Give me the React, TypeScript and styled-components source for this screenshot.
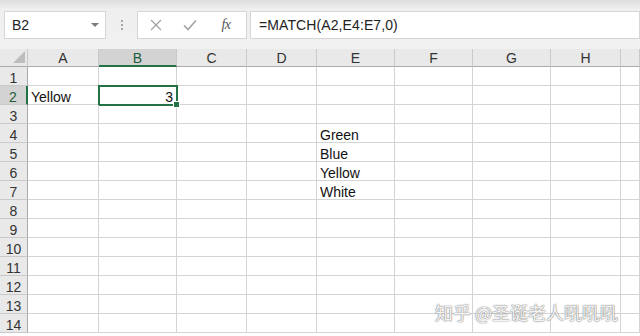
import React from "react";
import styled, { createGlobalStyle } from "styled-components";

const Global = createGlobalStyle`
  html, body { margin: 0; padding: 0; background: #fff; }
  body { font-family: "Liberation Sans", Arial, sans-serif; overflow: hidden; }
`;

const Page = styled.div`
  position: relative;
  width: 640px;
  height: 336px;
  overflow: hidden;
  display: flex;
  flex-direction: column;
  background: #fff;
`;

const Toolbar = styled.div`
  flex: none;
  height: 49px;
  box-sizing: border-box;
  padding: 11px 0 0 4px;
  background: linear-gradient(#dedede 0px, #efefef 9px, #f1f1f1 100%);
  display: flex;
  align-items: flex-start;
`;

const Box = styled.div<{ $w?: number }>`
  box-sizing: border-box;
  height: 28px;
  width: ${(p) => (p.$w ? `${p.$w}px` : "auto")};
  flex: ${(p) => (p.$w ? "none" : "1")};
  background: #fff;
  border: 1px solid #d6d6d6;
  display: flex;
  align-items: center;
  font-size: 14px;
  color: #222;
`;

const NameText = styled.span`
  flex: 1;
  padding-left: 7px;
`;

const Caret = styled.span`
  width: 0;
  height: 0;
  border-left: 4px solid transparent;
  border-right: 4px solid transparent;
  border-top: 4px solid #7a7a7a;
  margin-right: 6px;
`;

const Dots = styled.div`
  width: 31px;
  height: 28px;
  display: flex;
  flex-direction: column;
  align-items: center;
  justify-content: center;
  gap: 2px;
  & > i {
    width: 2px;
    height: 2px;
    background: #a8a8a8;
  }
`;

const IconSlot = styled.div<{ $w: number }>`
  width: ${(p) => p.$w}px;
  display: flex;
  justify-content: center;
  align-items: center;
`;

const Fx = styled.span`
  font-family: "Liberation Serif", serif;
  font-style: italic;
  font-size: 14px;
  color: #555;
  letter-spacing: -0.5px;
`;

const Formula = styled.span`
  padding-left: 8px;
  letter-spacing: 0.1px;
`;

const Gap = styled.div<{ $w: number }>`
  width: ${(p) => p.$w}px;
  flex: none;
`;

const Sheet = styled.div`
  flex: none;
  display: grid;
  grid-template-columns: 28px 71px 78px 70px 70px 78px 78px 78px 70px 1fr;
  grid-template-rows: 18px;
  grid-auto-rows: 19px;
`;

const Corner = styled.div`
  position: relative;
  background: #e9e9e9;
  border-right: 1px solid #c9c9c9;
  border-bottom: 1px solid #ababab;
  &::after {
    content: "";
    position: absolute;
    right: 2px;
    bottom: 3px;
    width: 0;
    height: 0;
    border-left: 12px solid transparent;
    border-bottom: 12px solid #bdbdbd;
  }
`;

const ColHead = styled.div<{ $sel?: boolean }>`
  box-sizing: border-box;
  background: ${(p) => (p.$sel ? "#d3d3d3" : "#e9e9e9")};
  border-right: 1px solid #c9c9c9;
  border-bottom: ${(p) => (p.$sel ? "2px solid #217346" : "1px solid #ababab")};
  color: ${(p) => (p.$sel ? "#1f5d3a" : "#333")};
  font-size: 14px;
  line-height: 19px;
  text-align: center;
`;

const RowHead = styled.div<{ $sel?: boolean }>`
  box-sizing: border-box;
  background: ${(p) => (p.$sel ? "#d3d3d3" : "#e9e9e9")};
  border-right: ${(p) => (p.$sel ? "2px solid #217346" : "1px solid #ababab")};
  border-bottom: 1px solid #c9c9c9;
  color: ${(p) => (p.$sel ? "#1f5d3a" : "#333")};
  font-size: 14px;
  line-height: 22px;
  text-align: center;
`;

const Cell = styled.div<{ $right?: boolean; $active?: boolean }>`
  position: relative;
  box-sizing: border-box;
  border-right: 1px solid #d4d4d4;
  border-bottom: 1px solid #d4d4d4;
  font-size: 14px;
  line-height: 23px;
  color: #111;
  padding: 0 3px;
  white-space: nowrap;
  overflow: visible;
  text-align: ${(p) => (p.$right ? "right" : "left")};
  ${(p) =>
    p.$active &&
    `
    &::after {
      content: "";
      position: absolute;
      top: -1px;
      left: -1px;
      right: -2px;
      bottom: -2px;
      border: 2px solid #217346;
    }
    &::before {
      content: "";
      position: absolute;
      right: -4px;
      bottom: -4px;
      width: 5px;
      height: 5px;
      background: #217346;
      border: 1px solid #fff;
      z-index: 2;
    }
  `}
`;

const Watermark = styled.div`
  position: absolute;
  left: 435px;
  top: 299px;
  font-family: "Noto Sans CJK SC", sans-serif;
  font-size: 18px;
  color: rgba(255, 255, 255, 0.92);
  text-shadow: 0 0 1px #8a8a8a, 0 0 1px #8a8a8a, 0 0 2px rgba(0, 0, 0, 0.25);
  white-space: nowrap;
`;

const cols = ["A", "B", "C", "D", "E", "F", "G", "H", ""];

const data: Record<string, string> = {
  "A2": "Yellow",
  "B2": "3",
  "E4": "Green",
  "E5": "Blue",
  "E6": "Yellow",
  "E7": "White",
};

export default function App() {
  const rows = Array.from({ length: 14 }, (_, i) => i + 1);
  return (
    <>
      <Global />
      <Page>
        <Toolbar>
          <Box $w={102}>
            <NameText>B2</NameText>
            <Caret />
          </Box>
          <Dots>
            <i />
            <i />
            <i />
          </Dots>
          <Box $w={110}>
            <IconSlot $w={36}>
              <svg width="12" height="12" viewBox="0 0 12 12">
                <path d="M1 1L11 11M11 1L1 11" stroke="#a3a3a3" strokeWidth="1.3" fill="none" />
              </svg>
            </IconSlot>
            <IconSlot $w={32}>
              <svg width="14" height="12" viewBox="0 0 14 12">
                <path d="M1 6.5L5 10.5L13 1.5" stroke="#a3a3a3" strokeWidth="1.6" fill="none" />
              </svg>
            </IconSlot>
            <IconSlot $w={40}>
              <Fx>fx</Fx>
            </IconSlot>
          </Box>
          <Gap $w={3} />
          <Box>
            <Formula>=MATCH(A2,E4:E7,0)</Formula>
          </Box>
        </Toolbar>
        <Sheet>
          <Corner />
          {cols.map((c, i) => (
            <ColHead key={i} $sel={c === "B"}>
              {c}
            </ColHead>
          ))}
          {rows.map((r) => (
            <React.Fragment key={r}>
              <RowHead $sel={r === 2}>{r}</RowHead>
              {cols.map((c, i) => {
                const id = `${c}${r}`;
                const v = data[id];
                return (
                  <Cell key={i} $right={id === "B2"} $active={id === "B2"}>
                    {v}
                  </Cell>
                );
              })}
            </React.Fragment>
          ))}
        </Sheet>
        <Watermark>知乎 @圣诞老人吼吼吼</Watermark>
      </Page>
    </>
  );
}
